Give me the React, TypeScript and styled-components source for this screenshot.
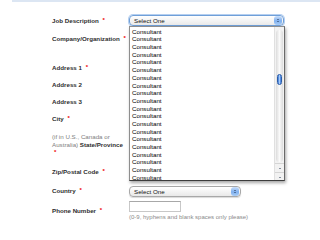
import styled, { createGlobalStyle } from "styled-components";

// styles for the contact form with the open job list

const GlobalStyle = createGlobalStyle`
  html, body {
    margin: 0;
    padding: 0;
    background: #fff;
  }
  body {
    width: 320px;
    height: 240px;
    overflow: hidden;
    font-family: "Liberation Sans", Arial, sans-serif;
  }
`;

const Page = styled.div`
  position: relative;
  width: 320px;
  height: 240px;
`;

const TopBand = styled.div`
  margin-left: 12px;
  height: 2px;
  background: #dce6f3;
`;

const Form = styled.div`
  display: flex;
  flex-direction: column;
  padding: 13px 0 0 52px;
`;

const Row = styled.div<{ $h?: number }>`
  display: flex;
  align-items: flex-start;
  height: ${(p) => (p.$h ? `${p.$h}px` : "auto")};
`;

const Label = styled.div<{ $pt?: number }>`
  width: 77px;
  flex-shrink: 0;
  padding-top: ${(p) => p.$pt ?? 0}px;
  font-size: 6.2px;
  line-height: 8px;
  font-weight: bold;
  color: #2e2e2e;
  white-space: nowrap;
`;

const Note = styled.span`
  font-weight: normal;
  color: #808080;
`;

const Req = styled.span`
  display: inline-block;
  margin-left: 2px;
  color: #e00;
  font-size: 6px;
  line-height: 6px;
  vertical-align: 1px;
`;

const Field = styled.div`
  display: flex;
  flex-direction: column;
  align-items: flex-start;
`;

const SelectBox = styled.div<{ $w: number; $focus?: boolean }>`
  position: relative;
  box-sizing: border-box;
  width: ${(p) => p.$w}px;
  height: 11px;
  padding-left: 4px;
  display: flex;
  align-items: center;
  border-radius: 4px;
  border: 1px solid ${(p) => (p.$focus ? "#6f9fd8" : "#a8a8a8")};
  box-shadow: ${(p) => (p.$focus ? "0 0 0 1px #b5cff0" : "0 1px 1px rgba(0,0,0,0.15)")};
  background: linear-gradient(#ffffff, #e9e9e9);
  font-size: 6.2px;
  line-height: 8px;
  color: #111;
`;

const SelectButton = styled.span`
  position: absolute;
  right: 1px;
  top: 0;
  width: 8px;
  height: 9px;
  border-radius: 3px;
  background: linear-gradient(#c9defa, #7fb0ef 55%, #a9cdf6);
  display: flex;
  flex-direction: column;
  align-items: center;
  justify-content: center;
  gap: 1px;
`;

const Tri = styled.span<{ $down?: boolean }>`
  width: 0;
  height: 0;
  border-left: 1.3px solid transparent;
  border-right: 1.3px solid transparent;
  ${(p) =>
    p.$down ? "border-top: 1.6px solid #1d2f4a;" : "border-bottom: 1.6px solid #1d2f4a;"}
`;

const TextBox = styled.input<{ $w: number }>`
  box-sizing: border-box;
  width: ${(p) => p.$w}px;
  height: 11px;
  margin: 0;
  border: 1px solid #c8c8c8;
  border-top-color: #a8a8a8;
  padding: 0 2px;
  font-size: 6px;
`;

const Hint = styled.div`
  margin-top: 2px;
  font-size: 6px;
  line-height: 7px;
  color: #8a8a8a;
  white-space: nowrap;
`;

const ListBox = styled.div`
  position: absolute;
  left: 129px;
  top: 26px;
  box-sizing: border-box;
  width: 156px;
  height: 155px;
  overflow: hidden;
  background: #fff;
  border: 1px solid #8e8e8e;
  border-bottom-color: #3c3c3c;
  border-right-color: #6a6a6a;
  box-shadow: 1px 2px 3px rgba(0, 0, 0, 0.35);
`;

const Options = styled.div`
  margin-top: -7px;
  margin-right: 10px;
`;

const Option = styled.div`
  height: 7.69px;
  line-height: 7.69px;
  padding-left: 2px;
  font-size: 6.2px;
  color: #000;
  white-space: nowrap;
`;

const ScrollBar = styled.div`
  position: absolute;
  top: 0;
  right: 0;
  bottom: 0;
  width: 9px;
  background: #f2f2f2;
  border-left: 1px solid #e0e0e0;
`;

const Groove = styled.div`
  position: absolute;
  left: 1px;
  right: 1px;
  top: 3px;
  bottom: 18px;
  border-radius: 4px;
  background: linear-gradient(90deg, #dcdcdc, #fafafa 50%, #dcdcdc);
`;

const Thumb = styled.div`
  position: absolute;
  left: 2px;
  width: 5px;
  top: 47px;
  height: 11px;
  border-radius: 3px;
  background: linear-gradient(90deg, #2f6fd6, #a8ccf8 50%, #2f6fd6);
  border: 0.5px solid #2a5ca8;
  box-sizing: border-box;
`;

const ArrowCell = styled.div<{ $top: number }>`
  position: absolute;
  left: 0;
  right: 0;
  top: ${(p) => p.$top}px;
  height: 8px;
  display: flex;
  align-items: center;
  justify-content: center;
  border-top: 1px solid #d4d4d4;
`;

const options = Array.from({ length: 22 }, () => "Consultant");

export default function App() {
  return (
    <Page>
      <GlobalStyle />
      <TopBand />
      <Form>
        <Row $h={20}>
          <Label $pt={2}>
            Job Description <Req>*</Req>
          </Label>
          <Field>
            <SelectBox $w={155} $focus>
              Select One
              <SelectButton>
                <Tri />
                <Tri $down />
              </SelectButton>
            </SelectBox>
          </Field>
        </Row>
        <Row $h={29}>
          <Label>
            Company/Organization <Req>*</Req>
          </Label>
          <Field>
            <TextBox $w={140} />
          </Field>
        </Row>
        <Row $h={17}>
          <Label>
            Address 1 <Req>*</Req>
          </Label>
          <Field>
            <TextBox $w={140} />
          </Field>
        </Row>
        <Row $h={17}>
          <Label>Address 2</Label>
          <Field>
            <TextBox $w={140} />
          </Field>
        </Row>
        <Row $h={17}>
          <Label>Address 3</Label>
          <Field>
            <TextBox $w={140} />
          </Field>
        </Row>
        <Row $h={18}>
          <Label>
            City <Req>*</Req>
          </Label>
          <Field>
            <TextBox $w={140} />
          </Field>
        </Row>
        <Row $h={35}>
          <Label>
            <Note>(if in U.S., Canada or</Note>
            <br />
            <Note>Australia)</Note> State/Province
            <br />
            <Req>*</Req>
          </Label>
          <Field>
            <TextBox $w={140} />
          </Field>
        </Row>
        <Row $h={18}>
          <Label>
            Zip/Postal Code <Req>*</Req>
          </Label>
          <Field>
            <TextBox $w={140} />
          </Field>
        </Row>
        <Row $h={15}>
          <Label $pt={1}>
            Country <Req>*</Req>
          </Label>
          <Field>
            <SelectBox $w={112}>
              Select One
              <SelectButton>
                <Tri />
                <Tri $down />
              </SelectButton>
            </SelectBox>
          </Field>
        </Row>
        <Row>
          <Label $pt={6}>
            Phone Number <Req>*</Req>
          </Label>
          <Field>
            <TextBox $w={52} />
            <Hint>(0-9, hyphens and blank spaces only please)</Hint>
          </Field>
        </Row>
      </Form>
      <ListBox>
        <Options>
          {options.map((o, i) => (
            <Option key={i}>{o}</Option>
          ))}
        </Options>
        <ScrollBar>
          <Groove />
          <Thumb />
          <ArrowCell $top={136}>
            <Tri />
          </ArrowCell>
          <ArrowCell $top={145}>
            <Tri $down />
          </ArrowCell>
        </ScrollBar>
      </ListBox>
    </Page>
  );
}
